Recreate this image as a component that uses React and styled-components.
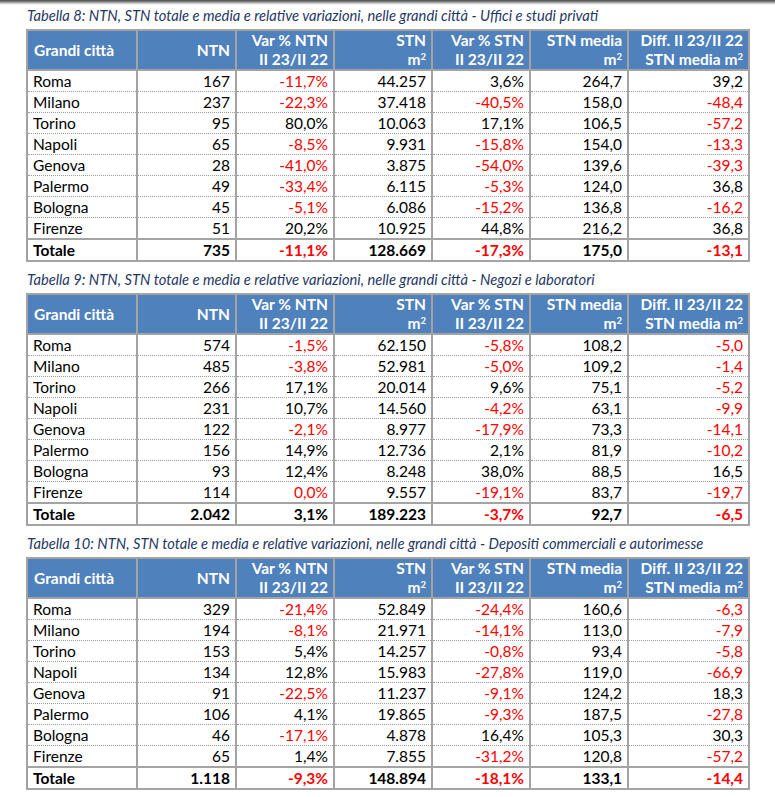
import React from 'react';
import styled, { createGlobalStyle } from 'styled-components';

const GlobalStyle = createGlobalStyle`
  html, body {
    margin: 0;
    padding: 0;
    background: #fff;
  }
  body {
    font-family: Lato, 'Liberation Sans', sans-serif;
  }
`;

const TopShadow = styled.div`
  height: 5px;
  background: linear-gradient(to bottom, #4a4a4a 0%, #8a8a8a 40%, #e8e8e8 80%, #fff 100%);
`;

const Page = styled.div`
  padding: 0 27px 8px 26px;
`;

const Caption = styled.div`
  font-style: italic;
  font-size: 14.7px;
  color: #1f3864;
  line-height: 20px;
  height: 20px;
  margin: ${props => (props.first ? '0 0 4px 1px' : '7px 0 4px 1px')};
  white-space: nowrap;
`;

const Table = styled.table`
  width: 722px;
  border-collapse: collapse;
  table-layout: fixed;
  border: 2px solid #a3a3a3;
  font-size: 15.5px;
  color: #000;
`;

const HeadCell = styled.th`
  background: #4f81bd;
  color: #fff;
  font-weight: 700;
  text-align: ${props => (props.left ? 'left' : 'right')};
  padding: 0 5px 0 6px;
  height: 38px;
  line-height: 19px;
  border: 2px solid #a3a3a3;
  vertical-align: middle;
  white-space: nowrap;
`;

const Row = styled.tr`
  border-bottom: ${props => (props.last ? 'none' : '1px dotted #9c9c9c')};
  border-top: ${props => (props.total ? '2px solid #a3a3a3' : 'none')};
`;

const Cell = styled.td`
  height: 20px;
  line-height: 20px;
  padding: 0 5px 0 5px;
  text-align: ${props => (props.left ? 'left' : 'right')};
  font-weight: ${props => (props.bold ? 700 : 400)};
  color: ${props => (props.red ? '#ff0000' : '#000')};
  border-left: 2px solid #a3a3a3;
  border-right: 2px solid #a3a3a3;
  white-space: nowrap;
`;

const Sup = styled.sup`
  font-size: 0.62em;
  line-height: 0;
  vertical-align: 0.55em;
`;

const widths = [110, 99, 98, 98, 98, 98, 121];

const isRed = v => v.startsWith('-') || v === '0,0%';

const tables = [
  {
    caption: 'Tabella 8: NTN, STN totale e media e relative variazioni, nelle grandi città - Uffici e studi privati',
    rows: [
      ['Roma', '167', '-11,7%', '44.257', '3,6%', '264,7', '39,2'],
      ['Milano', '237', '-22,3%', '37.418', '-40,5%', '158,0', '-48,4'],
      ['Torino', '95', '80,0%', '10.063', '17,1%', '106,5', '-57,2'],
      ['Napoli', '65', '-8,5%', '9.931', '-15,8%', '154,0', '-13,3'],
      ['Genova', '28', '-41,0%', '3.875', '-54,0%', '139,6', '-39,3'],
      ['Palermo', '49', '-33,4%', '6.115', '-5,3%', '124,0', '36,8'],
      ['Bologna', '45', '-5,1%', '6.086', '-15,2%', '136,8', '-16,2'],
      ['Firenze', '51', '20,2%', '10.925', '44,8%', '216,2', '36,8'],
    ],
    total: ['Totale', '735', '-11,1%', '128.669', '-17,3%', '175,0', '-13,1'],
  },
  {
    caption: 'Tabella 9: NTN, STN totale e media e relative variazioni, nelle grandi città - Negozi e laboratori',
    rows: [
      ['Roma', '574', '-1,5%', '62.150', '-5,8%', '108,2', '-5,0'],
      ['Milano', '485', '-3,8%', '52.981', '-5,0%', '109,2', '-1,4'],
      ['Torino', '266', '17,1%', '20.014', '9,6%', '75,1', '-5,2'],
      ['Napoli', '231', '10,7%', '14.560', '-4,2%', '63,1', '-9,9'],
      ['Genova', '122', '-2,1%', '8.977', '-17,9%', '73,3', '-14,1'],
      ['Palermo', '156', '14,9%', '12.736', '2,1%', '81,9', '-10,2'],
      ['Bologna', '93', '12,4%', '8.248', '38,0%', '88,5', '16,5'],
      ['Firenze', '114', '0,0%', '9.557', '-19,1%', '83,7', '-19,7'],
    ],
    total: ['Totale', '2.042', '3,1%', '189.223', '-3,7%', '92,7', '-6,5'],
  },
  {
    caption: 'Tabella 10: NTN, STN totale e media e relative variazioni, nelle grandi città - Depositi commerciali e autorimesse',
    rows: [
      ['Roma', '329', '-21,4%', '52.849', '-24,4%', '160,6', '-6,3'],
      ['Milano', '194', '-8,1%', '21.971', '-14,1%', '113,0', '-7,9'],
      ['Torino', '153', '5,4%', '14.257', '-0,8%', '93,4', '-5,8'],
      ['Napoli', '134', '12,8%', '15.983', '-27,8%', '119,0', '-66,9'],
      ['Genova', '91', '-22,5%', '11.237', '-9,1%', '124,2', '18,3'],
      ['Palermo', '106', '4,1%', '19.865', '-9,3%', '187,5', '-27,8'],
      ['Bologna', '46', '-17,1%', '4.878', '16,4%', '105,3', '30,3'],
      ['Firenze', '65', '1,4%', '7.855', '-31,2%', '120,8', '-57,2'],
    ],
    total: ['Totale', '1.118', '-9,3%', '148.894', '-18,1%', '133,1', '-14,4'],
  },
];

const HeaderRow = () => (
  <tr>
    <HeadCell left>Grandi città</HeadCell>
    <HeadCell>NTN</HeadCell>
    <HeadCell>Var % NTN<br />II 23/II 22</HeadCell>
    <HeadCell>STN<br />m<Sup>2</Sup></HeadCell>
    <HeadCell>Var % STN<br />II 23/II 22</HeadCell>
    <HeadCell>STN media<br />m<Sup>2</Sup></HeadCell>
    <HeadCell>Diff. II 23/II 22<br />STN media m<Sup>2</Sup></HeadCell>
  </tr>
);

const DataTable = ({ caption, rows, total, first }) => (
  <>
    <Caption first={first}>{caption}</Caption>
    <Table>
      <colgroup>
        {widths.map((w, i) => <col key={i} style={{ width: w }} />)}
      </colgroup>
      <thead>
        <HeaderRow />
      </thead>
      <tbody>
        {rows.map((r, i) => (
          <Row key={i} last={i === rows.length - 1}>
            {r.map((v, j) => (
              <Cell key={j} left={j === 0} red={j > 0 && isRed(v)}>{v}</Cell>
            ))}
          </Row>
        ))}
        <Row total last>
          {total.map((v, j) => (
            <Cell key={j} bold left={j === 0} red={j > 0 && isRed(v)}>{v}</Cell>
          ))}
        </Row>
      </tbody>
    </Table>
  </>
);

export default function App() {
  return (
    <>
      <GlobalStyle />
      <TopShadow />
      <Page>
        {tables.map((t, i) => (
          <DataTable key={i} first={i === 0} {...t} />
        ))}
      </Page>
    </>
  );
}
